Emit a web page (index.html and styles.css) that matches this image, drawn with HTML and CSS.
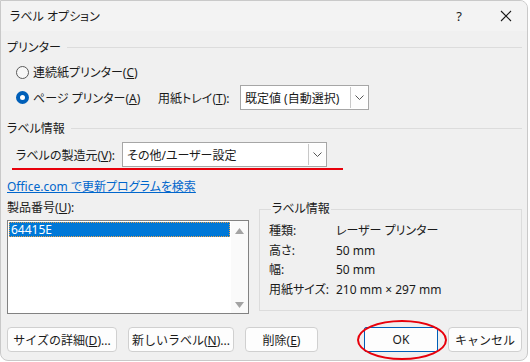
FILE: index.html
```html
<!DOCTYPE html>
<html lang="ja">
<head>
    <meta charset="UTF-8">
    <title>ラベル オプション</title>
    <link rel="stylesheet" href="styles.css">
</head>
<body>
    <div class="dialog">
        <div class="titlebar">
            <span class="title">ラベル オプション</span>
            <span class="help">?</span>
            <svg class="close" width="12" height="12" viewBox="0 0 12 12">
                <path d="M1 1 L11 11 M11 1 L1 11" stroke="#1a1a1a" stroke-width="1.1" fill="none"/>
            </svg>
        </div>

        <div class="content">
            <div class="group-head"><span>プリンター</span><span class="rule"></span></div>

            <div class="radio-row">
                <span class="radio"></span>
                <span>連続紙プリンター(<u>C</u>)</span>
            </div>

            <div class="radio-row tray-row">
                <span class="radio-label">
                    <span class="radio on"></span>
                    <span>ページ プリンター(<u>A</u>)</span>
                </span>
                <span class="tray-label">用紙トレイ(<u>T</u>):</span>
                <div class="select tray">
                    <span class="select-text">既定値 (自動選択)</span>
                    <span class="drop">
                        <svg width="9" height="5" viewBox="0 0 9 5"><path d="M0.5 0.5 L4.5 4.5 L8.5 0.5" stroke="#555" fill="none"/></svg>
                    </span>
                </div>
            </div>

            <div class="group-head second"><span>ラベル情報</span><span class="rule"></span></div>

            <div class="vendor-row">
                <span class="vendor-label">ラベルの製造元(<u>V</u>):</span>
                <div class="select vendor">
                    <span class="select-text">その他/ユーザー設定</span>
                    <span class="drop">
                        <svg width="9" height="5" viewBox="0 0 9 5"><path d="M0.5 0.5 L4.5 4.5 L8.5 0.5" stroke="#555" fill="none"/></svg>
                    </span>
                </div>
                <span class="red-line"></span>
            </div>

            <div class="link-row"><a href="#" class="link">Office.com で更新プログラムを検索</a></div>

            <div class="lower">
                <div class="product">
                    <div class="product-label">製品番号(<u>U</u>):</div>
                    <div class="listbox">
                        <div class="list-items">
                            <div class="list-item selected">64415E</div>
                        </div>
                        <div class="scrollbar">
                            <svg width="9" height="6" viewBox="0 0 9 6"><path d="M0 6 L4.5 0 L9 6 Z" fill="#a3a3a3"/></svg>
                            <svg width="9" height="6" viewBox="0 0 9 6"><path d="M0 0 L4.5 6 L9 0 Z" fill="#a3a3a3"/></svg>
                        </div>
                    </div>
                </div>

                <fieldset class="info">
                    <legend>ラベル情報</legend>
                    <div class="info-row"><span class="key">種類:</span><span>レーザー プリンター</span></div>
                    <div class="info-row"><span class="key">高さ:</span><span>50 mm</span></div>
                    <div class="info-row"><span class="key">幅:</span><span>50 mm</span></div>
                    <div class="info-row"><span class="key">用紙サイズ:</span><span>210 mm × 297 mm</span></div>
                </fieldset>
            </div>

            <div class="buttons">
                <button class="btn w-details">サイズの詳細(<u>D</u>)...</button>
                <button class="btn w-new">新しいラベル(<u>N</u>)...</button>
                <button class="btn w-delete">削除(<u>E</u>)</button>
                <button class="btn btn-ok">OK<span class="red-ring"></span></button>
                <button class="btn btn-cancel">キャンセル</button>
            </div>
        </div>
    </div>
</body>
</html>
```

FILE: styles.css
```css
body {
    margin: 0;
    background-color: #fff;
    font-family: "Noto Sans", "Noto Sans CJK JP", sans-serif;
    font-size: 12px;
    color: #1a1a1a;
    font-feature-settings: "palt";
}

.dialog {
    width: 528px;
    height: 361px;
    box-sizing: border-box;
    border: 1px solid #c9c9c9;
    border-radius: 0 8px 8px 8px;
    background-color: #f0f0f0;
    overflow: hidden;
}

.titlebar {
    height: 30px;
    display: flex;
    align-items: center;
    background-color: #f3f3f3;
    padding-left: 9px;
}

.title {
    flex: 1;
}

.help {
    font-size: 13px;
    margin-right: 38px;
}

.close {
    margin-right: 15px;
}

.content {
    padding: 0 5px 0 6px;
}

.group-head {
    display: flex;
    align-items: center;
    height: 18px;
    margin-top: 7px;
}

.group-head.second {
    margin-top: 9px;
}

.rule {
    flex: 1;
    height: 1px;
    background-color: #dcdcdc;
    margin-left: 6px;
}

.radio-row {
    display: flex;
    align-items: center;
    height: 20px;
    margin-top: 6px;
    padding-left: 9px;
}

.radio {
    width: 13px;
    height: 13px;
    box-sizing: border-box;
    border: 1px solid #5a5a5a;
    border-radius: 50%;
    background-color: #f7f7f7;
    margin-right: 4px;
    flex-shrink: 0;
}

.radio.on {
    border: 4px solid #005fb8;
    background-color: #fff;
}

.tray-row {
    height: 25px;
    margin-top: 3px;
}

.radio-label {
    display: flex;
    align-items: center;
    width: 142px;
}

.tray-label {
    width: 82px;
}

.select {
    display: flex;
    align-items: stretch;
    box-sizing: border-box;
    height: 25px;
    border: 1px solid #a6a6a6;
    background-color: #fff;
}

.select-text {
    flex: 1;
    display: flex;
    align-items: center;
    padding-left: 4px;
}

.drop {
    width: 16px;
    border-left: 1px solid #c8c8c8;
    margin: 1px;
    display: flex;
    align-items: center;
    justify-content: center;
    background-color: #fdfdfd;
}

.tray {
    width: 129px;
}

.vendor-row {
    position: relative;
    display: flex;
    align-items: center;
    height: 25px;
    margin-top: 5px;
    padding-left: 9px;
}

.vendor-label {
    width: 106px;
}

.vendor {
    width: 205px;
}

.red-line {
    position: absolute;
    left: 5px;
    top: 26px;
    width: 331px;
    height: 2px;
    background-color: #e8000b;
}

.link-row {
    height: 18px;
    line-height: 18px;
    margin-top: 11px;
}

.link {
    color: #0066cc;
}

.lower {
    display: flex;
    margin-top: 3px;
}

.product {
    width: 242px;
}

.product-label {
    height: 18px;
    line-height: 18px;
}

.listbox {
    display: flex;
    height: 94px;
    margin-top: 3px;
    box-sizing: border-box;
    border: 1px solid #828282;
    background-color: #fff;
}

.list-items {
    flex: 1;
    padding: 1px;
}

.list-item {
    height: 15px;
    line-height: 15px;
    padding-left: 2px;
}

.list-item.selected {
    background-color: #0078d7;
    color: #fff;
    outline: 1px dotted #e8a04a;
    outline-offset: -1px;
}

.scrollbar {
    width: 17px;
    display: flex;
    flex-direction: column;
    justify-content: space-between;
    align-items: center;
    padding: 7px 0 5px;
    background-color: #fafafa;
}

.info {
    flex: 1;
    margin: 1px 0 0 10px;
    padding: 3px 0 0 9px;
    height: 111px;
    box-sizing: border-box;
    border: 1px solid #dcdcdc;
}

.info legend {
    padding: 0 1px;
    margin-left: 2px;
    height: 18px;
    line-height: 18px;
}

.info-row {
    display: flex;
    height: 19.5px;
    line-height: 19.5px;
}

.key {
    width: 67px;
}

.buttons {
    display: flex;
    align-items: center;
    margin-top: 13px;
    height: 25px;
}

.btn {
    position: relative;
    height: 25px;
    box-sizing: border-box;
    border: 1px solid #d0d0d0;
    border-radius: 4px;
    background-color: #fdfdfd;
    font-family: inherit;
    font-size: 12px;
    color: #1a1a1a;
    padding: 0;
    margin-right: 11px;
}

.w-details { width: 110px; }
.w-new { width: 106px; }
.w-delete { width: 73px; }

.btn-ok {
    width: 74px;
    margin-left: auto;
    margin-right: 10px;
    border-color: #005fb8;
    border-radius: 2px;
}

.btn-cancel {
    width: 74px;
    margin-right: 0;
}

.red-ring {
    position: absolute;
    left: -8px;
    top: -8px;
    width: 90px;
    height: 40px;
    box-sizing: border-box;
    border: 2px solid #e8000b;
    border-radius: 50%;
}
```
